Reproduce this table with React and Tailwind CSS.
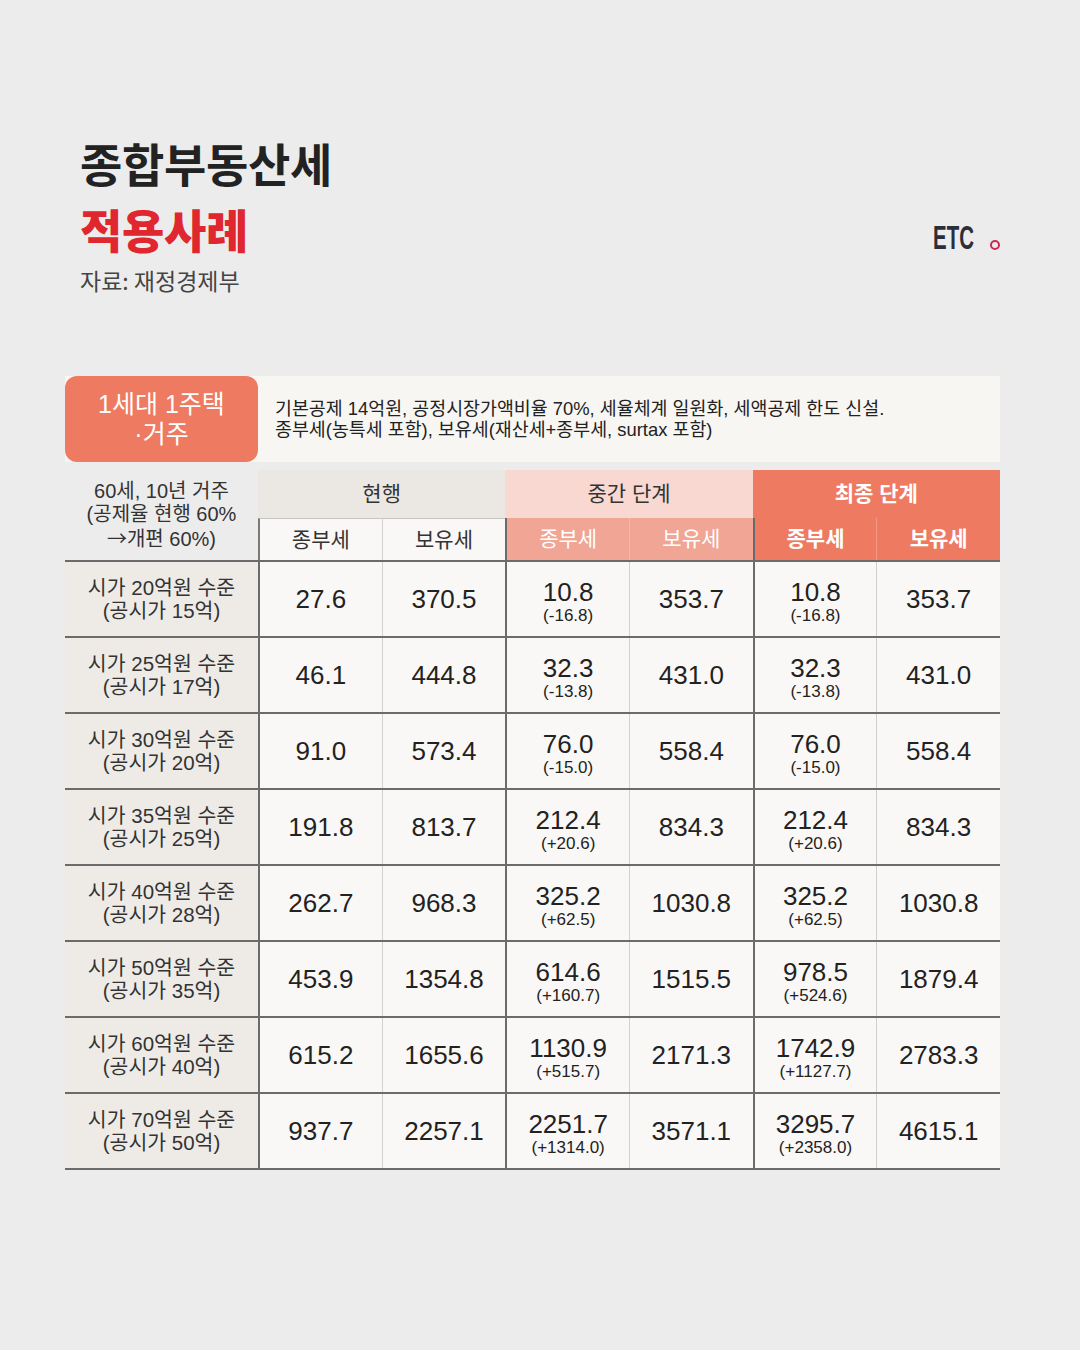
import React from "react";

const rows = [
  ["시가 20억원 수준", "(공시가 15억)", ["27.6"], ["370.5"], ["10.8", "(-16.8)"], ["353.7"], ["10.8", "(-16.8)"], ["353.7"]],
  ["시가 25억원 수준", "(공시가 17억)", ["46.1"], ["444.8"], ["32.3", "(-13.8)"], ["431.0"], ["32.3", "(-13.8)"], ["431.0"]],
  ["시가 30억원 수준", "(공시가 20억)", ["91.0"], ["573.4"], ["76.0", "(-15.0)"], ["558.4"], ["76.0", "(-15.0)"], ["558.4"]],
  ["시가 35억원 수준", "(공시가 25억)", ["191.8"], ["813.7"], ["212.4", "(+20.6)"], ["834.3"], ["212.4", "(+20.6)"], ["834.3"]],
  ["시가 40억원 수준", "(공시가 28억)", ["262.7"], ["968.3"], ["325.2", "(+62.5)"], ["1030.8"], ["325.2", "(+62.5)"], ["1030.8"]],
  ["시가 50억원 수준", "(공시가 35억)", ["453.9"], ["1354.8"], ["614.6", "(+160.7)"], ["1515.5"], ["978.5", "(+524.6)"], ["1879.4"]],
  ["시가 60억원 수준", "(공시가 40억)", ["615.2"], ["1655.6"], ["1130.9", "(+515.7)"], ["2171.3"], ["1742.9", "(+1127.7)"], ["2783.3"]],
  ["시가 70억원 수준", "(공시가 50억)", ["937.7"], ["2257.1"], ["2251.7", "(+1314.0)"], ["3571.1"], ["3295.7", "(+2358.0)"], ["4615.1"]],
];

const colBorders = [
  "border-l-2 border-[#6b6b6b]",
  "border-l border-[#d3cfcb]",
  "border-l-2 border-[#6b6b6b]",
  "border-l border-[#d3cfcb]",
  "border-l-2 border-[#6b6b6b]",
  "border-l border-[#d3cfcb]",
];

const FONT = { fontFamily: '"Liberation Sans", "Noto Sans CJK KR", sans-serif' };
const CJK = { fontFamily: '"Noto Sans CJK KR", sans-serif' };

function Cell({ v, i }) {
  return (
    <div className={`${colBorders[i]} bg-[#faf8f6] flex flex-col items-center justify-center text-[#222] ${v[1] ? "pt-[6px]" : ""}`}>
      <div className="text-[26px] leading-[26px]">{v[0]}</div>
      {v[1] && <div className="text-[17px] leading-[20px] mt-[1px]">{v[1]}</div>}
    </div>
  );
}

export default function App() {
  return (
    <div className="w-[1080px] min-h-[1350px] bg-[#ececec] overflow-hidden" style={FONT}>
      <div className="flex justify-between items-start pl-[80px] pr-[80px] pt-[136px]">
        <div className="flex flex-col" style={CJK}>
          <div className="text-[46px] leading-[52px] font-bold text-[#222] tracking-[-0.3px]">종합부동산세</div>
          <div className="text-[46px] leading-[52px] font-black text-[#e0262f] mt-[14px] tracking-[-0.3px]">적용사례</div>
          <div className="text-[23px] leading-[30px] text-[#444] mt-[11px]">자료: 재정경제부</div>
        </div>
        <div className="flex items-end gap-[16px] mt-[85px]">
          <span className="inline-block font-bold text-[33px] leading-[34px] text-[#2b2f3b] scale-x-[0.62] origin-right" style={{ fontFamily: '"Liberation Sans", sans-serif' }}>ETC</span>
          <span className="w-[10px] h-[10px] rounded-full border-2 border-[#c92c53] mb-[5px]"></span>
        </div>
      </div>

      <div className="ml-[65px] w-[935px] mt-[81px]">
        <div className="flex h-[86px] bg-[#f8f6f3]">
          <div className="w-[193px] rounded-[12px] bg-[#ee7a61] text-white text-[25px] leading-[30px] flex flex-col items-center justify-center text-center">
            <div>1세대 1주택</div>
            <div>·거주</div>
          </div>
          <div className="flex-1 flex flex-col justify-center pl-[17px] text-[18.4px] leading-[21px] text-[#222]">
            <div>기본공제 14억원, 공정시장가액비율 70%, 세율체계 일원화, 세액공제 한도 신설.</div>
            <div>종부세(농특세 포함), 보유세(재산세+종부세, surtax 포함)</div>
          </div>
        </div>

        <div className="mt-[8px] grid grid-cols-[193px_repeat(6,minmax(0,1fr))] grid-rows-[48px_42px]">
          <div className="row-span-2 flex flex-col items-center justify-center text-center text-[20px] leading-[23px] text-[#333]">
            <div>60세, 10년 거주</div>
            <div>(공제율 현행 60%</div>
            <div><span style={CJK}>→</span>개편 60%)</div>
          </div>
          <div className="col-span-2 bg-[#ebe7e2] flex items-center justify-center text-[21px] text-[#333]">현행</div>
          <div className="col-span-2 bg-[#f8d8d1] flex items-center justify-center text-[21px] text-[#333]">중간 단계</div>
          <div className="col-span-2 bg-[#ed7a61] flex items-center justify-center text-[21px] font-bold text-white">최종 단계</div>

          <div className="border-l-2 border-t border-l-[#7a7a7a] border-t-[#c9c5c1] bg-[#faf8f6] flex items-center justify-center text-[21px] text-[#333]">종부세</div>
          <div className="border-l border-t border-l-[#d3cfcb] border-t-[#c9c5c1] bg-[#faf8f6] flex items-center justify-center text-[21px] text-[#333]">보유세</div>
          <div className="border-l-2 border-[#6b6b6b] bg-[#f1a594] flex items-center justify-center text-[21px] text-white">종부세</div>
          <div className="border-l border-[#f4b9ab] bg-[#f1a594] flex items-center justify-center text-[21px] text-white">보유세</div>
          <div className="border-l-2 border-[#6b6b6b] bg-[#ed7a61] flex items-center justify-center text-[21px] font-bold text-white">종부세</div>
          <div className="border-l border-[#f29a85] bg-[#ed7a61] flex items-center justify-center text-[21px] font-bold text-white">보유세</div>
        </div>

        <div className="border-t-2 border-[#6b6b6b]">
          {rows.map((r, ri) => (
            <div key={ri} className="grid grid-cols-[193px_repeat(6,minmax(0,1fr))] h-[76px] border-b-2 border-[#6b6b6b]">
              <div className="bg-[#eeebe7] flex flex-col items-center justify-center text-[20.5px] leading-[23px] text-[#333]">
                <div>{r[0]}</div>
                <div>{r[1]}</div>
              </div>
              {r.slice(2).map((v, i) => (
                <Cell key={i} v={v} i={i} />
              ))}
            </div>
          ))}
        </div>
      </div>
    </div>
  );
}
